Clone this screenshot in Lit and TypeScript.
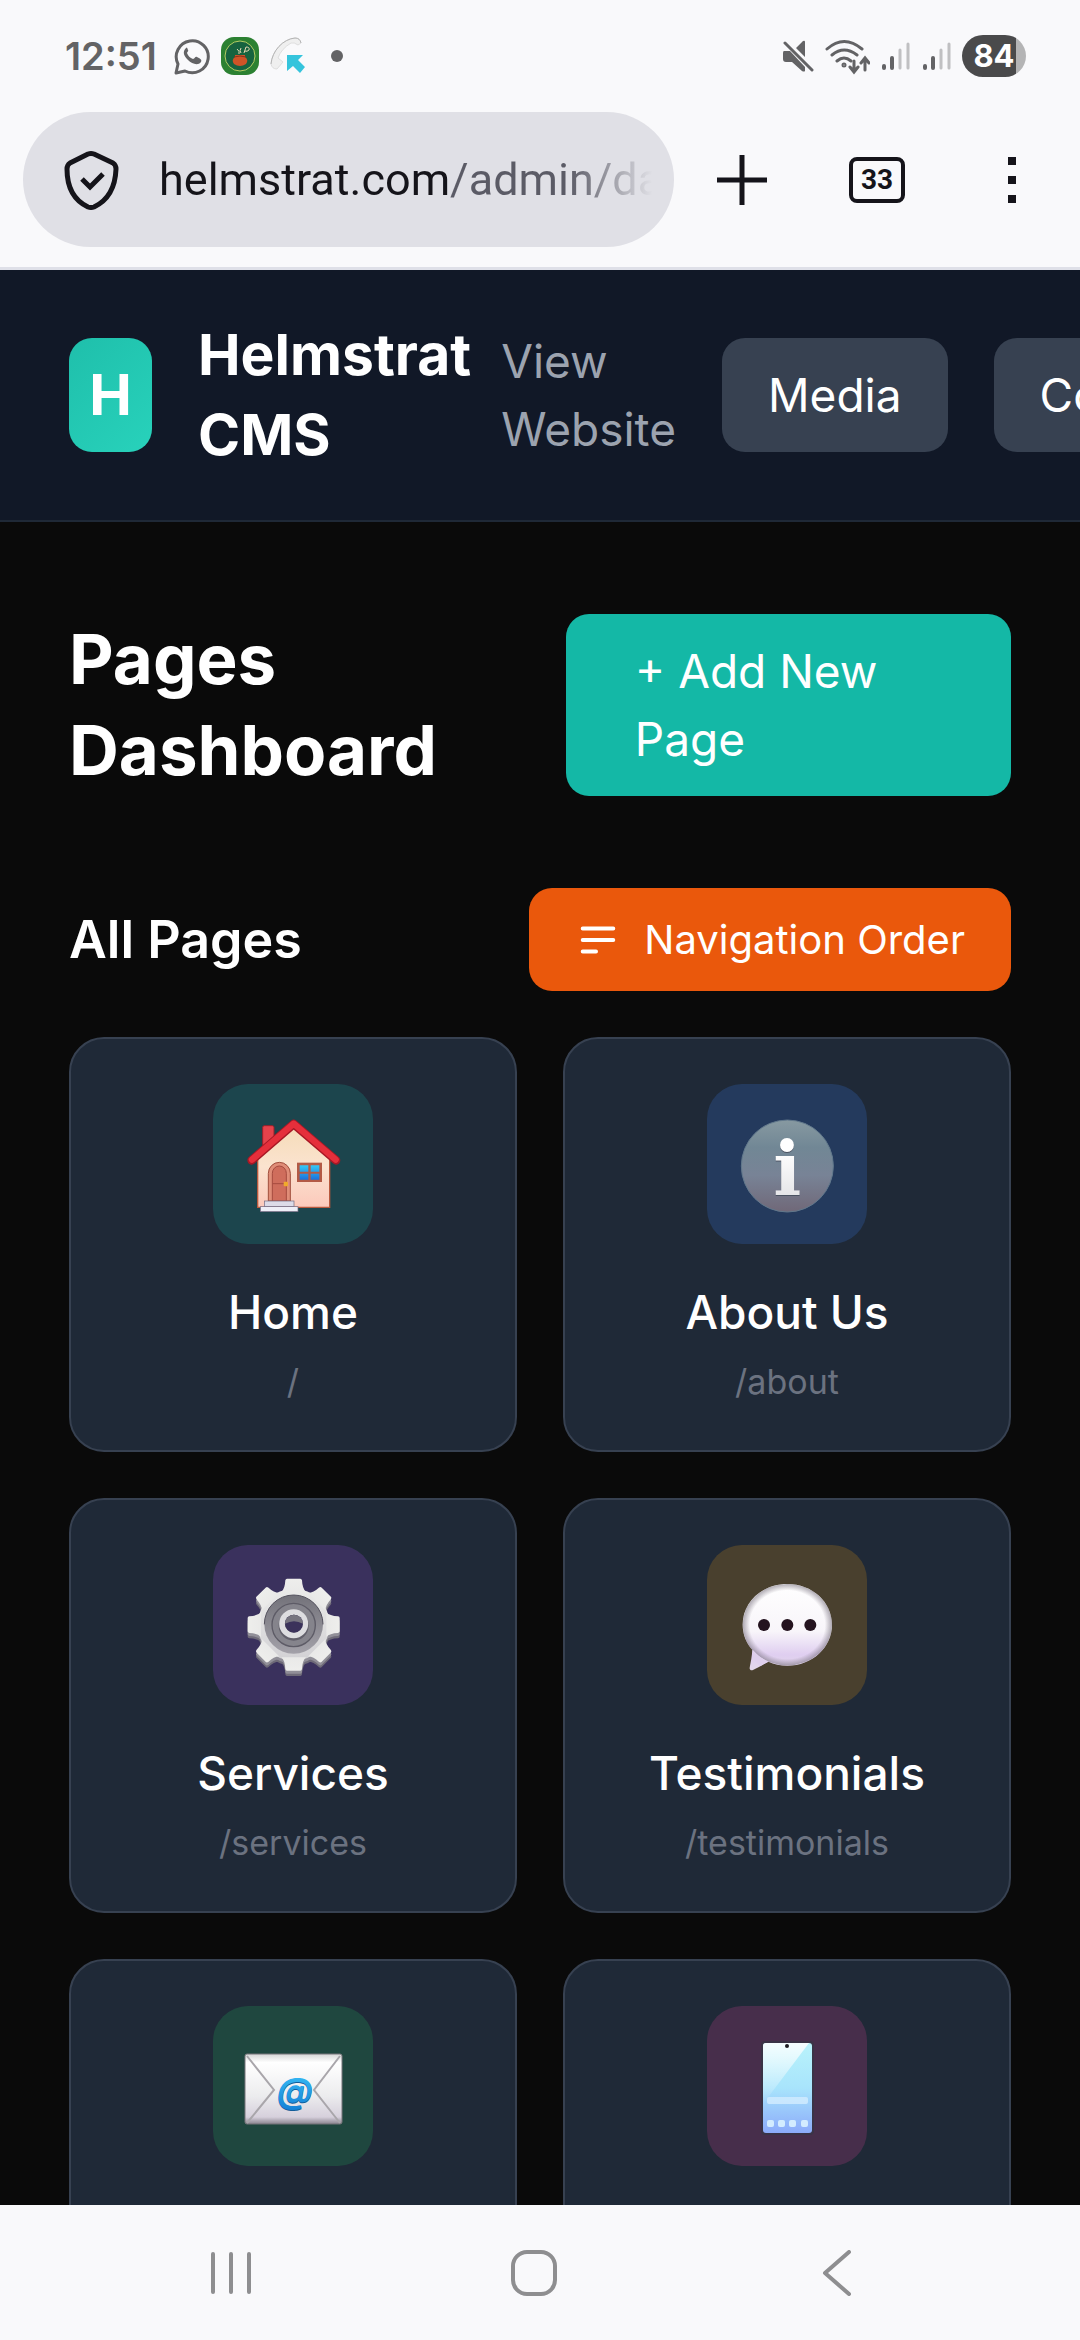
import { LitElement, html, css, svg, TemplateResult } from 'lit';
import { customElement, property } from 'lit/decorators.js';

interface Page {
    title?: string;
    path?: string;
    tone: string;
    icon: TemplateResult;
}

const house = html`
    <svg viewBox="39 42 480 480" aria-hidden="true">
        <defs>
            <linearGradient id="wall" x1="0" y1="0" x2="0" y2="1">
                <stop offset="0" stop-color="#f5dcb8"/>
                <stop offset="0.5" stop-color="#fbe3cf"/>
                <stop offset="1" stop-color="#fcc9bb"/>
            </linearGradient>
            <linearGradient id="glass" x1="0" y1="0" x2="0" y2="1">
                <stop offset="0" stop-color="#35c8f5"/>
                <stop offset="1" stop-color="#1a72dd"/>
            </linearGradient>
        </defs>
        <path d="M188 172q0-5 5-5h24q5 0 5 5v50l-34 28z" fill="#e6424b" stroke="#9e1f28" stroke-width="3"/>
        <path d="M173 262 280 168 389 262V412H173z" fill="url(#wall)" stroke="#b8593d" stroke-width="4"/>
        <path d="M155 271 281 162 408 271" fill="none" stroke="#a81825" stroke-width="26" stroke-linecap="round" stroke-linejoin="round"/>
        <path d="M156 269 281 161 407 269" fill="none" stroke="#e52f3b" stroke-width="19" stroke-linecap="round" stroke-linejoin="round"/>
        <path d="M205 393V310a33 33 0 0 1 66 0v83z" fill="#e08d78" stroke="#a14f3d" stroke-width="3"/>
        <path d="M217 393V310a21 22 0 0 1 42 0v83z" fill="#cf6d5c" stroke="#a54b3f" stroke-width="3"/>
        <path d="M218 341h40" stroke="#a54b3f" stroke-width="3"/>
        <rect x="251" y="335" width="13" height="14" rx="3" fill="#f0a92c"/>
        <rect x="291" y="278" width="75" height="58" fill="#b35a45"/>
        <path d="M299 286h26v19h-26zM332 286h26v19h-26zM299 311h26v18h-26zM332 311h26v18h-26z" fill="url(#glass)"/>
        <rect x="193" y="393" width="89" height="17" fill="#dcdbe8" stroke="#70677e" stroke-width="2"/>
        <rect x="181" y="410" width="113" height="15" fill="#eeeef7" stroke="#70677e" stroke-width="2"/>
    </svg>
`;

const info = html`
    <svg viewBox="51 42 480 480" aria-hidden="true">
        <defs>
            <linearGradient id="disc" x1="0" y1="0" x2="0" y2="1">
                <stop offset="0" stop-color="#8799a1"/>
                <stop offset="0.3" stop-color="#718795"/>
                <stop offset="0.6" stop-color="#788396"/>
                <stop offset="1" stop-color="#706878"/>
            </linearGradient>
            <linearGradient id="stem" x1="0" y1="0" x2="0" y2="1">
                <stop offset="0.3" stop-color="#ffffff"/>
                <stop offset="1" stop-color="#dcdce0"/>
            </linearGradient>
        </defs>
        <circle cx="292" cy="288" r="138" fill="url(#disc)" stroke="#61788c" stroke-width="3"/>
        <text class="info" x="292" y="378" text-anchor="middle" fill="#4b5362">i</text>
        <text class="info" x="292" y="374" text-anchor="middle" fill="url(#stem)">i</text>
    </svg>
`;

const teeth = [0, 45, 90, 135, 180, 225, 270, 315];

// One layer of the gear: a round body with eight tapered teeth
const gearLayer = (cy: number, fill: string) => svg`
    <g fill=${fill} transform="translate(281 ${cy})">
        <circle r="108"/>
        ${teeth.map((angle) => svg`
            <path d="M-37-98Q-26-108-25-133Q-24-138-20-138H20Q24-138 25-133Q26-108 37-98z" transform="rotate(${angle})"/>
        `)}
    </g>
`;

const gear = html`
    <svg viewBox="39 48 480 480" aria-hidden="true">
        <defs>
            <linearGradient id="steel" gradientUnits="userSpaceOnUse" x1="0" y1="-138" x2="0" y2="138">
                <stop offset="0" stop-color="#eeeeec"/>
                <stop offset="1" stop-color="#cfced2"/>
            </linearGradient>
            <linearGradient id="dish" x1="0" y1="0" x2="0" y2="1">
                <stop offset="0" stop-color="#73727a"/>
                <stop offset="1" stop-color="#a3a1a9"/>
            </linearGradient>
        </defs>
        ${gearLayer(303, '#6e6a78')}
        ${gearLayer(296, '#918f98')}
        ${gearLayer(287, 'url(#steel)')}
        <circle cx="281" cy="286" r="88" fill="url(#dish)"/>
        <circle cx="281" cy="288" r="65" fill="#85848c" stroke="#5d5b66" stroke-width="4"/>
        <path d="M193 286a88 88 0 0 1 176 0" fill="none" stroke="#55535f" stroke-width="3"/>
        <circle cx="281" cy="290" r="45" fill="#62606b"/>
        <circle cx="281" cy="284" r="35" fill="none" stroke="#dddde0" stroke-width="17"/>
        <circle cx="282" cy="284" r="27" fill="#3b325b"/>
        <path d="M255 284a27 27 0 0 1 54 0q-27-15-54 0z" fill="#777580"/>
    </svg>
`;

const bubble = html`
    <svg viewBox="51 48 480 480" aria-hidden="true">
        <defs>
            <linearGradient id="foam" x1="0" y1="0" x2="0" y2="1">
                <stop offset="0" stop-color="#ffffff"/>
                <stop offset="0.55" stop-color="#f8f5fa"/>
                <stop offset="0.82" stop-color="#dfcef0"/>
                <stop offset="1" stop-color="#e3d8ea"/>
            </linearGradient>
            <radialGradient id="rim">
                <stop offset="0.84" stop-color="#7c7582" stop-opacity="0"/>
                <stop offset="1" stop-color="#7c7582" stop-opacity="0.6"/>
            </radialGradient>
        </defs>
        <path d="M292 165c75 0 134 54 134 122s-59 123-134 123c-21 0-40-4-57-12-16 9-31 18-46 25-6 2-11-1-10-7 3-16 7-35 8-54-18-20-29-46-29-75 0-68 59-122 134-122z" fill="url(#foam)"/>
        <ellipse cx="292" cy="287" rx="134" ry="122" fill="url(#rim)"/>
        <path d="M188 362c14 16 30 28 47 36l-24 13c-16-8-22-25-23-49z" fill="#dfd0ed"/>
        <g fill="#24131f">
            <circle cx="222" cy="288" r="18"/>
            <circle cx="292" cy="288" r="18"/>
            <circle cx="361" cy="288" r="18"/>
        </g>
    </svg>
`;

const mail = html`
    <svg viewBox="0 0 160 160" aria-hidden="true">
        <defs>
            <linearGradient id="paper" x1="0" y1="0" x2="0" y2="1">
                <stop offset="0" stop-color="#d5d5d5"/>
                <stop offset="0.12" stop-color="#ffffff"/>
                <stop offset="0.6" stop-color="#ececee"/>
                <stop offset="0.9" stop-color="#d6d0dc"/>
                <stop offset="1" stop-color="#8b8590"/>
            </linearGradient>
            <linearGradient id="ink" x1="0" y1="0" x2="0" y2="1">
                <stop offset="0" stop-color="#3bc2f7"/>
                <stop offset="1" stop-color="#137fd6"/>
            </linearGradient>
        </defs>
        <rect x="32" y="48" width="97" height="70" rx="2" fill="url(#paper)" stroke="#77757a" stroke-width="1"/>
        <path d="M34 50 61 84 34 117M127 50 101 84 127 117" fill="none" stroke="#a9a6ab" stroke-width="2"/>
        <text class="at" x="82" y="98" text-anchor="middle" fill="#125d99">@</text>
        <text class="at" x="82" y="97" text-anchor="middle" fill="url(#ink)">@</text>
    </svg>
`;

const phone = html`
    <svg viewBox="0 0 160 160" aria-hidden="true">
        <defs>
            <linearGradient id="screen" x1="0" y1="0" x2="0" y2="1">
                <stop offset="0" stop-color="#b9f3fb"/>
                <stop offset="0.5" stop-color="#a8e4fc"/>
                <stop offset="1" stop-color="#8cabfa"/>
            </linearGradient>
            <linearGradient id="shine" x1="0" y1="0" x2="0" y2="1">
                <stop offset="0" stop-color="#ffffff" stop-opacity="0.85"/>
                <stop offset="1" stop-color="#ffffff" stop-opacity="0"/>
            </linearGradient>
        </defs>
        <rect x="54" y="35" width="53" height="94" rx="4" fill="#3a3346"/>
        <rect x="56" y="37" width="49" height="90" rx="3" fill="url(#screen)"/>
        <path d="M59 37H102L56 98V40q0-3 3-3z" fill="url(#shine)"/>
        <circle cx="80" cy="40" r="2" fill="#1c1c22"/>
        <g fill="#d3ecff">
            <rect x="60" y="91" width="41" height="7" rx="2" opacity="0.8"/>
            <rect x="60" y="114" width="7" height="7" rx="2"/>
            <rect x="71" y="114" width="7" height="7" rx="2"/>
            <rect x="82" y="114" width="7" height="7" rx="2"/>
            <rect x="94" y="114" width="7" height="7" rx="2"/>
        </g>
    </svg>
`;

const pages: Page[] = [
    { title: 'Home', path: '/', tone: 'teal', icon: house },
    { title: 'About Us', path: '/about', tone: 'blue', icon: info },
    { title: 'Services', path: '/services', tone: 'purple', icon: gear },
    { title: 'Testimonials', path: '/testimonials', tone: 'amber', icon: bubble },
    { tone: 'green', icon: mail },
    { tone: 'pink', icon: phone },
];

/**
 * Phone status bar
 */
@customElement('status-bar')
export class StatusBar extends LitElement {

    static styles = css`
        :host {
            display: flex;
            align-items: center;
            justify-content: space-between;
            height: 112px;
            padding: 0 54px 0 65px;
            box-sizing: border-box;
            color: #636365;
            font-family: Inter, "Liberation Sans", sans-serif;
        }
        .side {
            display: flex;
            align-items: center;
            gap: 10px;
        }
        .time {
            margin-right: 6px;
            font-size: 38px;
            font-weight: 600;
        }
        .dot {
            width: 12px;
            height: 12px;
            margin-left: 14px;
            border-radius: 50%;
            background: #636365;
        }
        .battery {
            width: 64px;
            height: 42px;
            border-radius: 21px;
            background: linear-gradient(90deg, #4a4a4b 84%, #b4b4b5 84%);
            color: #fff;
            font-size: 31px;
            font-weight: 700;
            line-height: 42px;
            text-align: center;
        }
        svg {
            display: block;
        }
    `;

    render() {
        return html`
            <div class="side">
                <span class="time">12:51</span>
                <svg width="38" height="38" viewBox="0 0 38 38" fill="none" stroke="currentColor" stroke-width="3">
                    <path d="M3 36 5 27A16 16 0 1 1 12 34z" stroke-linejoin="round"/>
                    <path d="M13 11c-4 4-2 8 2 12s10 6 13 2c1-2 0-3-4-5-2-1-2 2-4 2-3-1-5-3-6-6 0-1 2-2 1-3-1-3-1-3-2-2z" fill="currentColor" stroke="none"/>
                </svg>
                <svg width="38" height="38" viewBox="0 0 38 38">
                    <rect width="38" height="38" rx="13" fill="#2c8132"/>
                    <circle cx="19" cy="19" r="15" fill="#17633f" stroke="#b4cc63" stroke-width="1"/>
                    <path d="M14 18h10v2q4 3 1 7-6 4-12 0-3-4 1-7z" fill="#cf5427"/>
                    <path d="M13 20q6-2 12 0" stroke="#8b3219" stroke-width="1" fill="none"/>
                    <path d="M16 12q3 2 2 5M20 11q-2 3 0 5M23 16l2-6q4 0 3 3-2 2-4 1" stroke="#e5d8b1" stroke-width="1" fill="none"/>
                </svg>
                <svg width="38" height="38" viewBox="0 0 38 38">
                    <path d="M2 27C3 14 14 2 26 1q5 0 6 5l-3 2q-4-3-7-2Q12 12 9 21l5 4-6 7q-5 0-6-5z" fill="#efefef" stroke="#dedede" stroke-width="1"/>
                    <path d="M2 27C3 14 14 2 26 1q5 0 6 5" fill="none" stroke="#b5b5b5" stroke-width="1"/>
                    <path d="M18 18h16l-5 5 7 7-5 6-7-7-6 5z" fill="#35c4dc"/>
                </svg>
                <span class="dot"></span>
            </div>
            <div class="side">
                <svg width="32" height="32" viewBox="0 0 32 32" fill="currentColor">
                    <path d="M2 11h6l15 16v4q-1 1-3 0L10 22H4q-3 0-3-3v-6q0-2 1-2zM14 8l7-7q2-1 2 1v15z"/>
                    <path d="M3 3 30 30" stroke="currentColor" stroke-width="3" stroke-linecap="round"/>
                </svg>
                <svg width="46" height="38" viewBox="0 0 46 38" fill="none" stroke="currentColor" stroke-width="3" stroke-linecap="round">
                    <path d="M3 12q17-15 35 0M8 18q12-10 25 0M13 24q7-6 14 0"/>
                    <circle cx="20" cy="28" r="1"/>
                    <path d="M30 24v10M26 30l4 5 4-5M41 33V22M37 26l4-5 4 5"/>
                </svg>
                ${[1, 2].map(() => html`
                    <svg width="31" height="32" viewBox="0 0 31 32" fill="none" stroke-width="4" stroke-linecap="round">
                        <path d="M4 26v2M12 18v10" stroke="currentColor"/>
                        <path d="M20 10v18M28 4v24" stroke="#c0c0c2" stroke-width="3"/>
                    </svg>
                `)}
                <span class="battery">84</span>
            </div>
        `;
    }
}

/**
 * Browser toolbar with the address field
 */
@customElement('browser-toolbar')
export class BrowserToolbar extends LitElement {

    static styles = css`
        :host {
            display: flex;
            align-items: center;
            gap: 23px;
            padding: 0 23px 20px;
            border-bottom: 3px solid #dfe0e8;
            font-family: Roboto, "Noto Sans", sans-serif;
            color: #15141a;
        }
        button {
            flex: none;
            display: flex;
            align-items: center;
            justify-content: center;
            padding: 0;
            border: 0;
            background: none;
            color: inherit;
        }
        .address {
            flex: 1;
            min-width: 0;
            display: flex;
            align-items: center;
            gap: 40px;
            height: 135px;
            padding: 0 22px 0 40px;
            box-sizing: border-box;
            border-radius: 68px;
            background: #e0e0e6;
        }
        input {
            flex: 1;
            min-width: 0;
            padding: 0;
            border: 0;
            outline: none;
            /* host name dark, path grey, end faded out */
            background: linear-gradient(90deg, #15141a 290px, #5b5b66 290px, #5b5b66 410px, transparent 493px);
            background-clip: text;
            color: transparent;
            font: inherit;
            font-size: 45px;
            line-height: 64px;
        }
        .actions {
            display: flex;
            align-items: center;
            gap: 45px;
        }
        .action {
            width: 90px;
            height: 90px;
        }
        .count {
            width: 56px;
            height: 46px;
            box-sizing: border-box;
            border: 4px solid #15141a;
            border-radius: 8px;
            font-family: Roboto, sans-serif;
            font-size: 28px;
            font-weight: 700;
            line-height: 38px;
            text-align: center;
        }
    `;

    @property()
    url = 'helmstrat.com/admin/dashboard';

    render() {
        return html`
            <div class="address">
                <button aria-label="Site information">
                    <svg width="56" height="60" viewBox="0 0 56 60" fill="none" stroke="currentColor" stroke-width="5">
                        <path d="M25 4q3-1 6 0l19 9q3 2 3 6Q52 47 31 57q-3 1-6 0Q4 47 4 19q0-4 3-6z" stroke-linejoin="round"/>
                        <path d="M19 29l8 8 13-13"/>
                    </svg>
                </button>
                <input type="text" aria-label="Address" .value=${this.url}>
            </div>
            <div class="actions">
                <button class="action" aria-label="New tab">
                    <svg width="50" height="50" viewBox="0 0 50 50" stroke="currentColor" stroke-width="5">
                        <path d="M25 0v50M0 25h50"/>
                    </svg>
                </button>
                <button class="action" aria-label="Tabs"><span class="count">33</span></button>
                <button class="action" aria-label="Menu">
                    <svg width="18" height="46" viewBox="0 0 18 46" fill="currentColor">
                        <path d="M5 0h8v8H5zM5 19h8v8H5zM5 38h8v8H5z"/>
                    </svg>
                </button>
            </div>
        `;
    }
}

/**
 * Card for one page of the site
 */
@customElement('page-card')
export class PageCard extends LitElement {

    static styles = css`
        :host {
            display: flex;
        }
        .card {
            flex: 1;
            display: flex;
            flex-direction: column;
            align-items: center;
            padding: 45px;
            border: 2px solid #374151;
            border-radius: 35px;
            background: #1f2937;
            color: #fff;
            text-decoration: none;
        }
        .icon {
            width: 160px;
            height: 160px;
            border-radius: 35px;
            margin-bottom: 34px;
        }
        .icon svg {
            display: block;
            width: 100%;
            height: 100%;
        }
        .teal { background: rgba(20, 184, 166, 0.2); }
        .blue { background: rgba(59, 130, 246, 0.2); }
        .purple { background: rgba(168, 85, 247, 0.2); }
        .amber { background: rgba(245, 158, 11, 0.2); }
        .green { background: rgba(34, 197, 94, 0.2); }
        .pink { background: rgba(236, 72, 153, 0.2); }
        .info {
            font-family: "DejaVu Serif", serif;
            font-size: 222px;
            font-weight: 700;
        }
        .at {
            font-family: Inter, sans-serif;
            font-size: 35px;
            font-style: italic;
            font-weight: 700;
        }
        .title {
            font-size: 46px;
            font-weight: 500;
            line-height: 69px;
        }
        .path {
            margin-top: 12px;
            color: #6b7280;
            font-size: 34px;
            line-height: 46px;
        }
    `;

    @property({ attribute: false })
    page!: Page;

    render() {
        const { title, path, tone, icon } = this.page;
        return html`
            <a class="card" href="#">
                <div class="icon ${tone}">${icon}</div>
                ${title ? html`<span class="title">${title}</span>` : null}
                ${path ? html`<span class="path">${path}</span>` : null}
            </a>
        `;
    }
}

@customElement('app-root')
export class AppRoot extends LitElement {

    static styles = css`
        :host {
            display: flex;
            flex-direction: column;
            height: 100vh;
            overflow: hidden;
            background: #f9f9fb;
            font-family: Inter, "Liberation Sans", sans-serif;
        }
        .viewport {
            flex: 1;
            min-height: 0;
            overflow: hidden;
            background: #0a0a0a;
            color: #fff;
        }
        a {
            color: inherit;
            text-decoration: none;
        }
        h1, h2, p {
            margin: 0;
        }
        .header {
            display: flex;
            align-items: center;
            gap: 30px;
            padding: 45px 69px;
            border-bottom: 2px solid #1f2937;
            background: #111827;
        }
        .brand, .links {
            flex: none;
            display: flex;
            align-items: center;
            gap: 46px;
        }
        .logo {
            width: 83px;
            border-radius: 23px;
            background: linear-gradient(135deg, #1fbfab, #28d2bb);
            font-size: 57px;
            font-weight: 700;
            line-height: 114px;
            text-align: center;
        }
        .name {
            width: min-content;
            font-size: 57px;
            font-weight: 700;
            line-height: 80px;
        }
        .view {
            width: min-content;
            color: #9ca3af;
            font-size: 46px;
            line-height: 68px;
        }
        .pill {
            padding: 23px 46px;
            border-radius: 23px;
            background: #374151;
            font-size: 46px;
            line-height: 68px;
        }
        .main {
            padding: 92px 69px;
        }
        .top, .section {
            display: flex;
            align-items: center;
            justify-content: space-between;
        }
        .top {
            margin-bottom: 92px;
        }
        .section {
            margin-bottom: 46px;
        }
        h1 {
            font-size: 69px;
            font-weight: 700;
            line-height: 91px;
        }
        h2 {
            font-size: 52px;
            font-weight: 600;
            line-height: 80px;
        }
        .add {
            padding: 23px 69px;
            border-radius: 23px;
            background: #14b8a6;
            font-size: 46px;
            line-height: 68px;
        }
        .order {
            display: flex;
            align-items: center;
            gap: 23px;
            padding: 23px 46px;
            border: 0;
            border-radius: 23px;
            background: #ea580c;
            color: inherit;
            font: inherit;
            font-size: 40px;
            line-height: 57px;
        }
        .grid {
            display: grid;
            grid-template-columns: 1fr 1fr;
            grid-auto-rows: 1fr;
            gap: 46px;
        }
        .system {
            display: grid;
            grid-template-columns: 1fr 1fr 1fr;
            padding: 0 92px 0 80px;
            height: 135px;
        }
        .system button {
            display: flex;
            align-items: center;
            justify-content: center;
            padding: 0;
            border: 0;
            background: none;
            color: #8e8e90;
        }
    `;

    render() {
        return html`
            <status-bar></status-bar>
            <browser-toolbar></browser-toolbar>
            <div class="viewport">
                ${this._renderHeader()}
                <main class="main">
                    <div class="top">
                        <h1>Pages Dashboard</h1>
                        <a class="add" href="#">+ Add New Page</a>
                    </div>
                    <div class="section">
                        <h2>All Pages</h2>
                        <button class="order">
                            <svg width="46" height="46" viewBox="0 0 24 24" fill="none" stroke="currentColor" stroke-width="2" stroke-linecap="round">
                                <path d="M4 6h16M4 12h16M4 18h7"/>
                            </svg>
                            Navigation Order
                        </button>
                    </div>
                    <div class="grid">
                        ${pages.map((page) => html`<page-card .page=${page}></page-card>`)}
                    </div>
                </main>
            </div>
            ${this._renderSystemNav()}
        `;
    }

    _renderHeader() {
        return html`
            <header class="header">
                <div class="brand">
                    <div class="logo">H</div>
                    <p class="name">Helmstrat CMS</p>
                </div>
                <nav class="links">
                    <a class="view" href="#">View Website</a>
                    <a class="pill" href="#">Media</a>
                    <a class="pill" href="#">Contact</a>
                </nav>
            </header>
        `;
    }

    _renderSystemNav() {
        return html`
            <nav class="system">
                <button aria-label="Recent apps">
                    <svg width="42" height="44" viewBox="0 0 42 44" stroke="currentColor" stroke-width="4" stroke-linecap="round">
                        <path d="M3 3v38M21 3v38M39 3v38"/>
                    </svg>
                </button>
                <button aria-label="Home">
                    <svg width="46" height="46" viewBox="0 0 46 46" fill="none" stroke="currentColor" stroke-width="4">
                        <rect x="2" y="2" width="42" height="42" rx="14"/>
                    </svg>
                </button>
                <button aria-label="Back">
                    <svg width="30" height="46" viewBox="0 0 30 46" fill="none" stroke="currentColor" stroke-width="4" stroke-linecap="round" stroke-linejoin="round">
                        <path d="M27 2 3 23 27 44"/>
                    </svg>
                </button>
            </nav>
        `;
    }
}
